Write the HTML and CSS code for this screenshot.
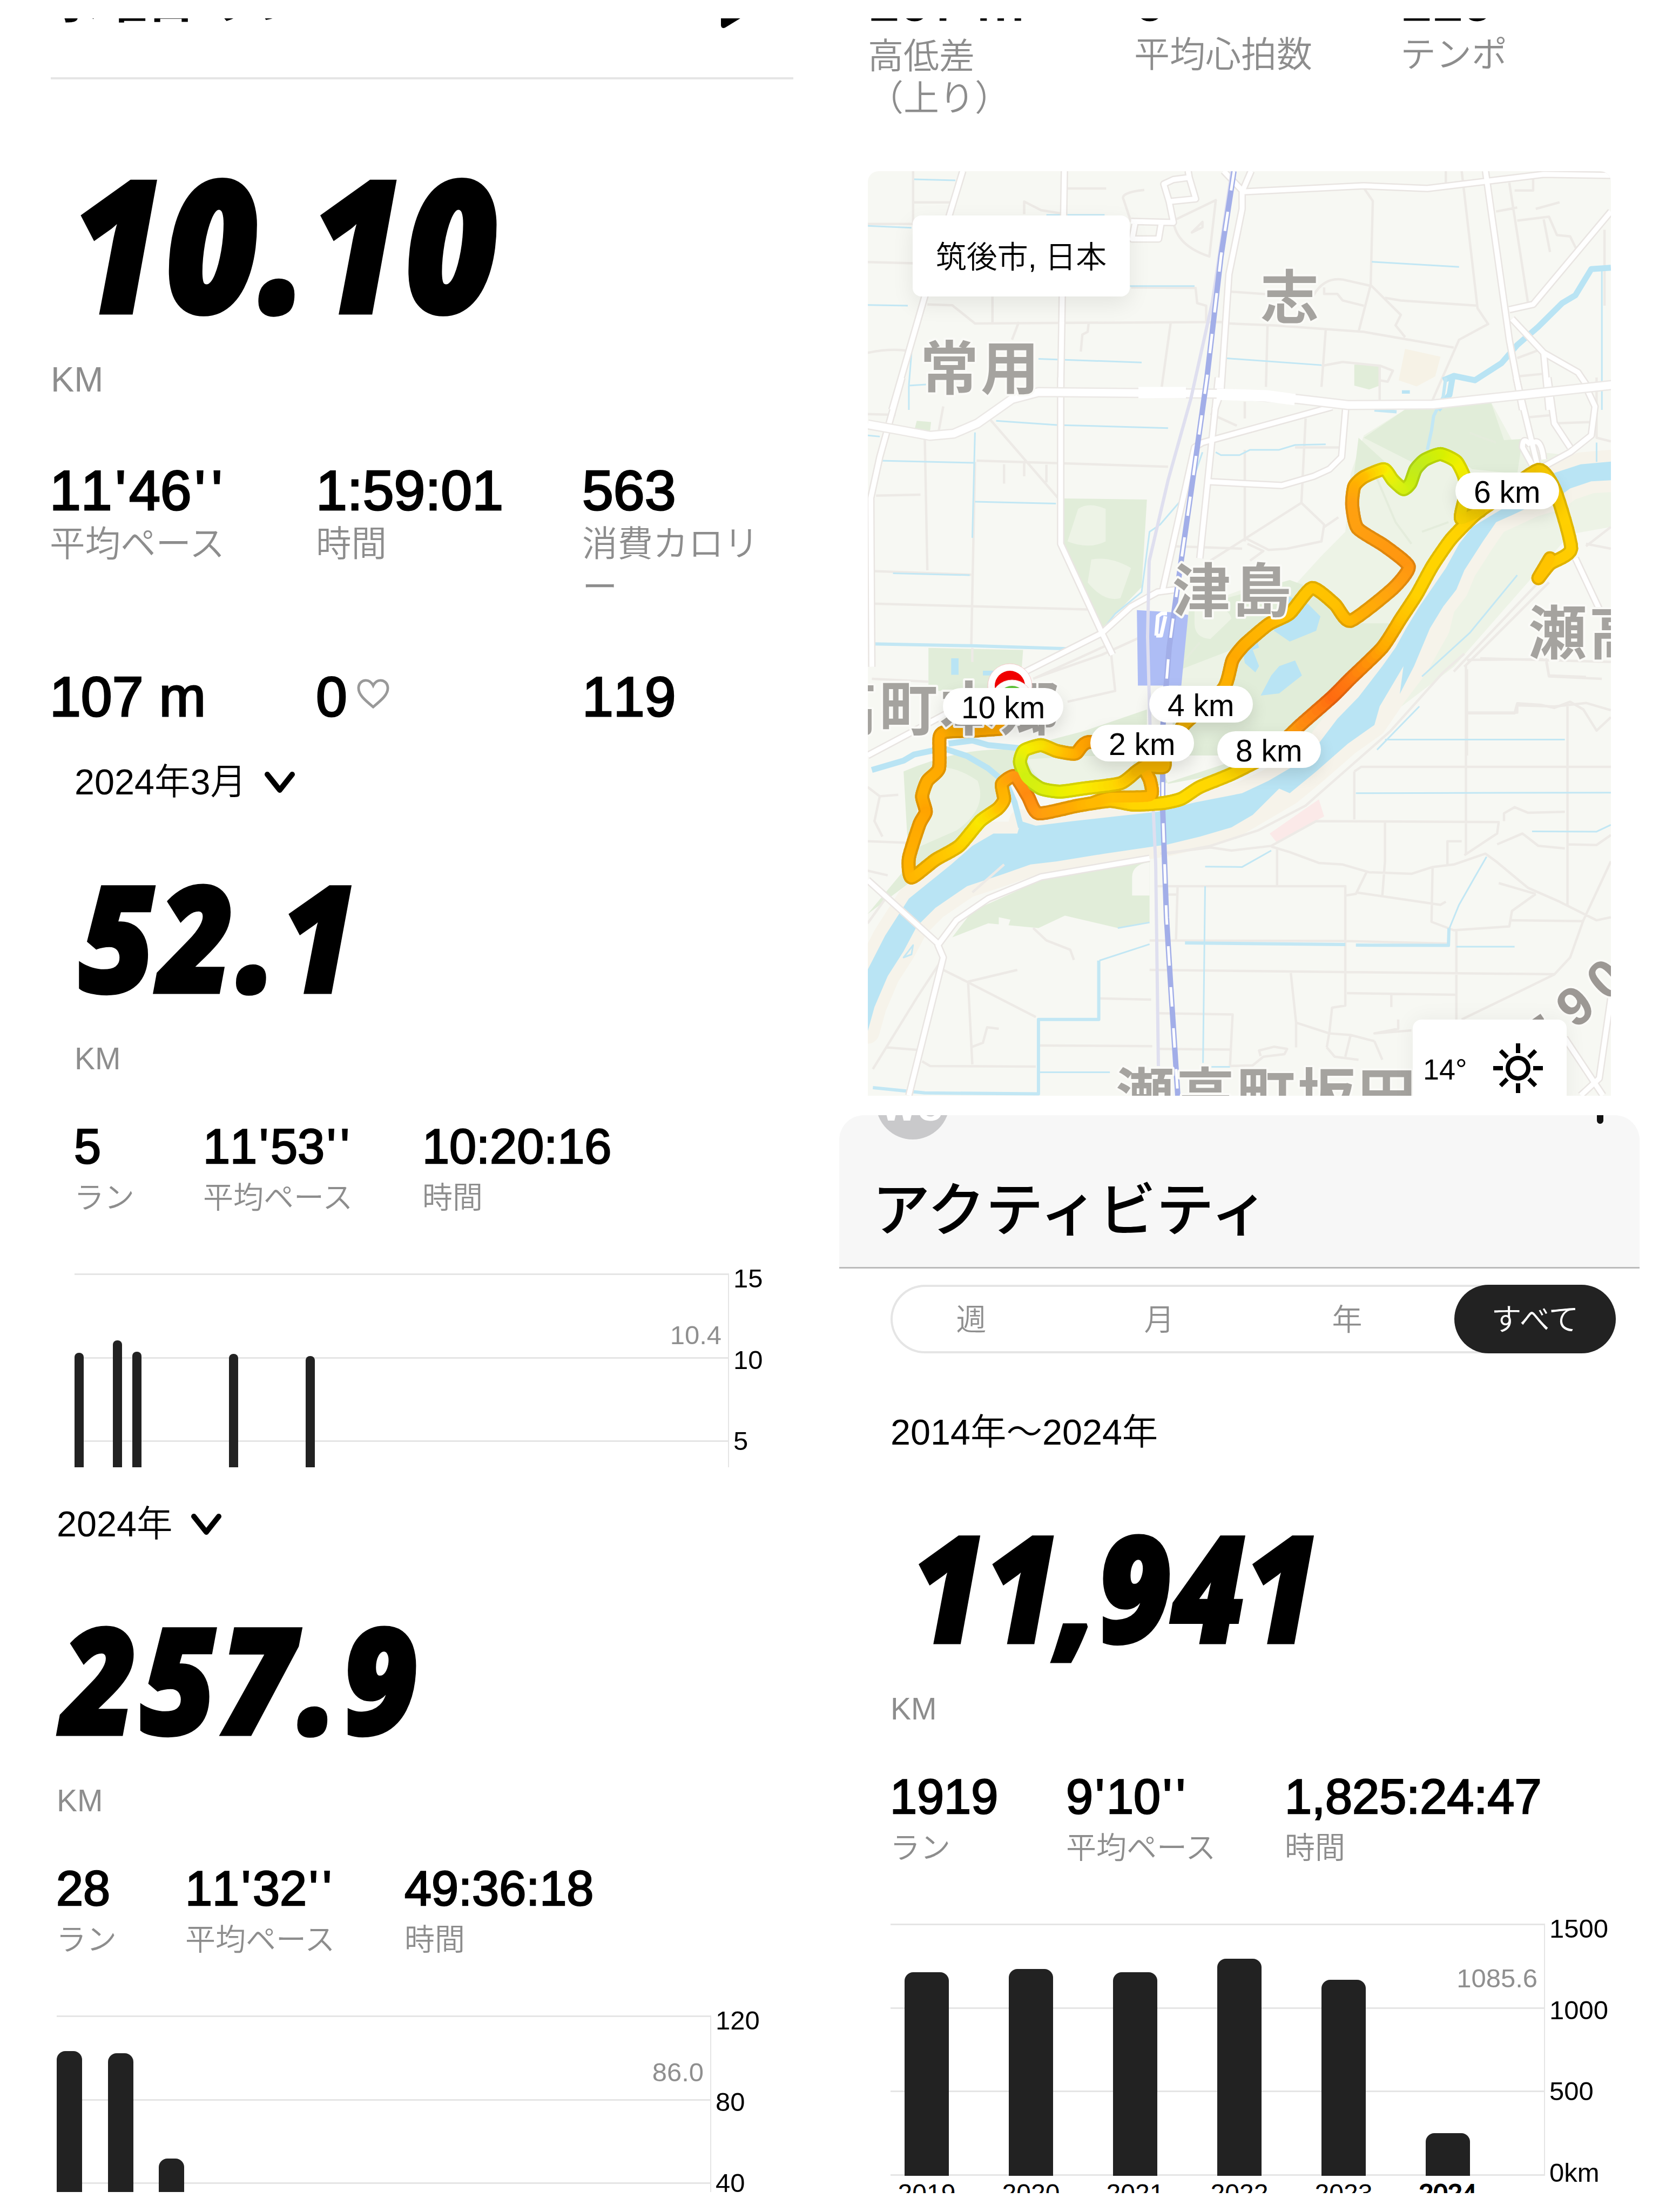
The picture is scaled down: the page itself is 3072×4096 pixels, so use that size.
FILE: index.html
```html
<!DOCTYPE html>
<html lang="ja">
<head>
    <meta charset="UTF-8">
    <meta name="viewport" content="width=device-width, initial-scale=1.0">
    <title>アクティビティ</title>
    <link rel="stylesheet" href="styles.css">
</head>
<body>
<div class="page">

    <div class="column">
        <!-- Run detail -->
        <section class="run">
            <header class="run-header">
                <h1>水曜日 ラン</h1>
                <svg class="bubble" width="50" height="90" viewBox="0 0 50 90"><path d="M4 60 L48 60 L48 66 L12 88 Q5 91 4 84 Z"/></svg>
            </header>
            <div class="distance distance-lg"><span>10.10</span></div>
            <p class="unit unit-lg">KM</p>
            <div class="metrics">
                <div><b>11<i>'</i>46<i>'</i><i>'</i></b><span>平均ペース</span></div>
                <div><b>1:59:01</b><span>時間</span></div>
                <div><b>563</b><span>消費カロリー</span></div>
            </div>
            <div class="metrics metrics-second">
                <div><b>107 m</b></div>
                <div><b>0</b><svg class="heart" width="62" height="58" viewBox="0 0 64 60"><path d="M32 55 C14 40 4 31 4 19 C4 9 11 4 18 4 C25 4 29 8 32 14 C35 8 39 4 46 4 C53 4 60 9 60 19 C60 31 50 40 32 55 Z"/></svg></div>
                <div><b>119</b></div>
            </div>
        </section>

        <!-- Month -->
        <section class="summary month">
            <p class="period">2024年3月 <svg class="chevron" width="56" height="42" viewBox="0 0 56 42"><path d="M5 5 L28 34 L51 5"/></svg></p>
            <div class="distance"><span>52.1</span></div>
            <p class="unit">KM</p>
            <div class="totals">
                <div><b>5</b><span>ラン</span></div>
                <div><b>11<i>'</i>53<i>'</i><i>'</i></b><span>平均ペース</span></div>
                <div><b>10:20:16</b><span>時間</span></div>
            </div>
            <div class="chart">
                <div class="plot">
                    <div class="lines"><i></i><i></i><i></i></div>
                    <em class="average" style="top: 89px">10.4</em>
                    <div class="bars days">
                        <i style="grid-column: 1; height: 320px"></i>
                        <i style="grid-column: 3; height: 343px"></i>
                        <i style="grid-column: 4; height: 322px"></i>
                        <i style="grid-column: 9; height: 318px"></i>
                        <i style="grid-column: 13; height: 314px"></i>
                    </div>
                </div>
                <div class="axis"><span>15</span><span>10</span><span>5</span></div>
            </div>
        </section>

        <!-- Year -->
        <section class="summary year">
            <p class="period">2024年 <svg class="chevron" width="56" height="42" viewBox="0 0 56 42"><path d="M5 5 L28 34 L51 5"/></svg></p>
            <div class="distance"><span>257.9</span></div>
            <p class="unit">KM</p>
            <div class="totals">
                <div><b>28</b><span>ラン</span></div>
                <div><b>11<i>'</i>32<i>'</i><i>'</i></b><span>平均ペース</span></div>
                <div><b>49:36:18</b><span>時間</span></div>
            </div>
            <div class="chart">
                <div class="plot">
                    <div class="lines"><i></i><i></i><i></i></div>
                    <em class="average" style="top: 80px">86.0</em>
                    <div class="bars months">
                        <i style="height: 401px"></i>
                        <i style="height: 397px"></i>
                        <i style="height: 202px"></i>
                    </div>
                </div>
                <div class="axis"><span>120</span><span>80</span><span>40</span></div>
            </div>
        </section>
    </div>

    <div class="column">
        <!-- Route -->
        <section class="route">
            <div class="metrics">
                <div><b>107 m</b><span>高低差<br>（上り）</span></div>
                <div class="raised"><b>0</b><span>平均心拍数</span></div>
                <div class="raised"><b>119</b><span>テンポ</span></div>
            </div>
            <div class="map">
                <svg class="map-art" width="1376" height="1712" viewBox="1607 318 1376 1712">
                    <!-- parks, sand and water -->
                    <g transform="matrix(.9796 0 0 .4847 1536 0)">
                        <path class="park" d="M992 1395 L1042 1395 L1040 1475 L1020 1490 L992 1475Z"/>
                        <path class="sand" d="M1088 1335 L1155 1365 L1145 1440 L1110 1478 L1076 1455Z"/>
                    </g>
                    <g transform="matrix(.9796 0 0 .4464 1536 700)">
                        <path class="park" d="M440 502 L600 506 L590 870 L515 1040 L440 690Z"/>
                        <path class="meadow" d="M470 545 Q490 515 522 545 L522 680 Q490 715 450 680Z M495 755 Q530 740 570 790 L550 915 Q520 935 488 850Z"/>
                        <path class="park" d="M187 1122 L366 1130 L360 1300 L187 1300Z M165 180 L192 185 L190 222 L160 222Z"/>
                        <path class="meadow" d="M1090 130 L1250 100 L1300 300 L1477 340 L1477 620 L1400 650 L1300 900 L1180 1200 L1060 1400 L900 1568 L640 1568 L680 960 L780 880 L880 860 L930 740 L975 640 L985 400 L1010 240Z"/>
                        <path class="park" d="M1090 130 L1250 100 L1275 260 L1310 255 L1300 400 L1215 380 L1160 300 L1100 350 L1010 250Z M1000 250 L1050 350 L990 430Z M680 960 L870 840 L920 880 L990 1020 L1080 1020 L980 1260 L860 1480 L740 1568 L640 1568Z"/>
                        <path class="meadow" d="M690 960 Q750 930 760 1000 L720 1085 Q690 1080 690 1020Z M760 1130 L745 1280 L660 1350 L665 1210Z"/>
                    </g>
                    <g transform="matrix(.9796 0 0 .574 1536 1200)">
                        <path class="park" d="M140 400 Q250 320 345 330 L480 270 L600 200 L600 260 L640 440 L800 390 L900 290 L560 480 L340 430 L260 620 L72 860 L150 700Z"/>
                        <path class="meadow" d="M375 360 L480 350 L580 350 L560 430 L420 455 Q380 410 375 360Z M170 420 Q210 350 280 430 Q300 520 240 590 L160 650Z"/>
                        <path class="park" d="M232 935 L270 850 L400 750 L605 690 L605 885 L545 905 L445 865 L395 905 L300 890Z"/>
                        <path class="block" d="M605 692 Q572 700 572 740 V800 H605Z M320 870 L342 878 L338 898 L320 895Z"/>
                        <path class="shop" d="M832 600 L925 490 L935 545 L845 628Z"/>
                        <path class="bank" d="M72 1240 L72 1040 L105 930 L150 810 L230 700 L270 640 L310 600 L355 600 L362 560 L390 575 L460 560 L540 545 L620 530 L690 500 L780 470 L830 430 L870 390 L920 320 L960 230 L1000 160 L1045 60 L1070 0 L1090 -62 L1115 -132 L1165 -256 L1190 -334 L1215 -389 L1290 -466 L1340 -521 L1370 -563 L1420 -591 L1480 -600 L1480 -540 L1440 -536 L1400 -513 L1375 -482 L1330 -459 L1290 -427 L1260 -404 L1235 -342 L1200 -249 L1185 -187 L1160 -132 L1150 -62 L1110 60 L1070 150 L1030 250 L980 310 L920 400 L870 470 L800 540 L760 580 L700 610 L640 635 L600 645 L520 665 L430 690 L380 700 L330 730 L260 770 L200 840 L165 900 L140 980 L110 1060 L85 1160Z"/>
                        <path class="river" d="M72 1240 L72 1040 L105 930 L150 810 L230 700 L270 640 L310 600 L355 600 L362 560 L390 575 L460 560 L540 545 L620 530 L690 500 L780 470 L830 430 L870 390 L920 320 L960 230 L1000 160 L1045 60 L1070 0 L1090 -62 L1115 -132 L1165 -256 L1190 -334 L1215 -389 L1290 -466 L1340 -521 L1370 -563 L1420 -591 L1480 -600 L1480 -540 L1440 -536 L1400 -513 L1375 -482 L1330 -459 L1290 -427 L1260 -404 L1235 -342 L1200 -249 L1185 -187 L1160 -132 L1135 -62 L1105 60 L1078 150 L1085 60 L1040 190 L1030 250 L980 310 L920 400 L870 470 L850 455 L800 540 L760 580 L700 610 L640 635 L600 645 L520 665 L430 690 L380 700 L330 730 L260 770 L200 840 L165 900 L140 980 L110 1060 L85 1160Z"/>
                        <path class="river" d="M860 -170 L905 -140 L928 -100 L920 -54 L870 -19 L840 -54Z M850 60 L880 42 L893 90 L850 148 L815 155 L835 90Z M780 -5 L805 -40 L812 0 L800 8 L812 60 L805 80 L785 50Z M230 35 L244 35 L244 88 L230 88Z M290 75 L320 75 L320 90 L290 90Z"/>
                        <path class="stream stream-wide" d="M80 395 L140 365 L160 345 L215 325 L260 350 L300 390 L335 440 L350 500 L362 580"/>
                        <path class="stream stream-wide" d="M225 310 L270 300 L300 315 L360 325"/>
                    </g>

                    <!-- streets -->
                    <g transform="matrix(.9796 0 0 .4847 1536 0)">
                        <path class="lane" d="M158 655 V860 M158 775 H228 M72 858 H158 M72 1003 L158 1008 M368 820 V772 L400 805 L440 818 M448 722 H523 M595 728 Q548 738 556 765 L570 850 M650 845 L732 765 M650 845 Q655 940 718 982 L730 770 M685 890 L705 850 L705 870Z M570 1100 L692 1102 L695 1160 L712 1170 V1235 M185 1165 L232 1168 L275 1238 L745 1232 M308 1135 V1235 M358 1232 L345 1300 M490 1235 L488 1270 L478 1280 L475 1345 M645 1235 L628 1480 M750 1115 L840 1128 M745 1237 L840 1245 L1010 1270 L1180 1330 M828 1245 L825 1480 M938 1262 L930 1480 M1010 720 L1027 770 L1023 1090 L1000 1270 M915 1130 Q935 1060 970 1070 L1025 1095 L1080 1205 L1070 1245 L1088 1290 M1050 1140 L1080 1150 L1225 1170 M935 1100 V1125 H960 L970 1150 L1010 1170 M1195 655 L1225 1180 L1245 1240 L1190 1300 L1140 1530 M1165 655 V700 M1285 700 L1320 1155 M1330 680 V730 H1295 M1335 800 L1380 775 M1260 810 L1300 795 M1300 845 L1360 830 L1375 900 L1400 905 L1412 955 M1350 840 L1362 965 M930 1400 L970 1385 L1042 1400 L1065 1418 L1055 1460 L1040 1455 M1040 1400 V1530 M1465 880 V1170 M1300 1370 L1340 1340 M1300 1440 L1350 1430 M72 1350 Q120 1330 155 1345"/>
                        <path class="stream" d="M72 865 L155 872 M160 687 L238 691 M410 823 H520 M568 1095 H690 M72 1167 L148 1170 M395 1373 L590 1387 M745 1370 L930 1397 M1025 1002 L1190 1022 M150 1568 V1475 L190 1470 M155 1350 L150 1475 M1460 1025 V1568"/>
                        <path class="stream stream-wide" d="M1477 1025 L1440 1030 L1425 1080 L1410 1130 L1385 1160 L1340 1250 L1300 1320 L1270 1390 L1220 1455 L1180 1438 L1160 1455 M1178 1440 L1172 1510 L1150 1568"/>
                        <path class="river" d="M1082 1493 H1097 V1506 H1082Z"/>
                    </g>
                    <g transform="matrix(.9796 0 0 .4464 1536 700)">
                        <path class="lane" d="M72 152 L125 155 M180 240 L185 800 M215 120 L205 240 M300 165 L432 500 M278 345 L640 370 M330 360 V440 M368 355 V410 M410 362 V435 M88 490 L172 486 M82 803 L268 818 M82 938 L487 962 M275 350 L268 1110 M785 300 V680 M900 170 L892 520 L935 610 L930 680 L865 710 L830 715 L785 665 M892 520 L720 760 M790 690 L820 720 L795 760 M935 620 L962 580 M650 700 L780 710 M720 150 L770 200 M785 100 V170 M880 290 H975 M1320 165 L1370 155 M1375 190 L1440 185 M1450 0 V250 L1477 265 M1430 690 L1477 710 M1430 700 L1477 620 M1340 850 L1180 1220 M1360 850 L1200 1200 M1205 1210 L1205 1568 M1230 1165 L1477 1180 M1205 1390 L1300 1390 V1360 L1370 1365 L1430 1350 L1477 1380 M1355 1180 L1360 1240 L1460 1250 M385 1250 L525 1110 M585 1080 L515 1150 L390 1245 M530 1100 L540 1300 L450 1345 M80 1250 L187 1262 M270 1122 V1180"/>
                        <path class="track" d="M1035 420 L1070 600 L1100 690 M1120 640 L1170 600 M1210 230 L1260 270 M990 640 L1050 700 M700 1100 L660 1200"/>
                        <path class="stream" d="M315 180 L430 197 L640 210 M95 345 L272 354 M275 228 L270 665 M275 515 L428 523 M120 812 L265 820 M730 310 L740 322 L775 322 L795 300 L850 300 L880 280 L938 277 M705 310 L680 470 L625 610 L605 640 L590 890 L540 980 L515 1050 M72 240 L95 245 M1450 270 V350 M1300 820 L1240 980 L1210 1060 L1120 1240"/>
                        <path class="stream stream-mid" d="M80 1105 L270 1113 L450 1125 M1165 0 L1160 80 L1142 160 L1138 220 L1130 300 M1030 135 L1072 142"/>
                        <path class="station" d="M581 965 L655 975 L678 985 L665 1278 L583 1278Z"/>
                    </g>
                    <g transform="matrix(.9796 0 0 .574 1536 1200)">
                        <path class="lane" d="M72 450 L95 480 L130 475 M95 480 L85 560 L100 610 M72 625 L145 630 M72 720 L110 735 M72 890 L110 800 M82 1360 L165 1130 L215 1000 M215 1040 L262 1080 L390 1192 M262 1078 L355 1040 M262 1080 L270 1345 M270 1288 L290 1275 L298 1225 L320 1230 M108 1290 L165 1298 M175 1335 L190 1350 L390 1352 M385 905 L410 945 L455 975 L462 1008 M510 1132 L608 1136 M398 1284 L610 1286 M620 770 H975 V1155 L950 1162 L945 1240 L940 1290 M658 770 L655 945 M605 945 L975 947 L1170 955 M605 1040 L975 1047 L1372 1054 M622 1180 L762 1184 L757 1350 M622 1295 L757 1297 M640 797 H658 M846 645 V770 M625 665 L720 645 L760 655 L835 640 L920 560 L1265 563 L1262 600 L1200 670 M992 400 V555 M992 400 L1005 385 L1477 385 M1203 60 V670 M1203 212 L1295 212 L1300 180 L1345 185 L1370 195 L1400 175 L1425 200 L1450 268 L1477 225 M1205 40 L1355 38 L1360 90 L1430 95 M1395 190 V835 M1275 560 L1275 535 L1295 515 L1320 533 L1390 530 M835 642 L870 660 L925 695 L970 700 L1020 725 L1100 730 L1140 708 L1180 700 L1240 665 L1260 690 L1320 775 L1380 820 L1450 880 L1477 870 M1050 565 V690 L1045 800 M1015 725 L995 795 L975 800 M995 790 L1155 830 L1165 820 M1140 710 L1138 885 L1180 912 L1285 900 L1290 850 L1335 795 M1335 795 L1265 760 M1285 880 L1425 883 M1477 690 L1425 880 L1400 1000 L1370 1055 L1195 1200 M1395 635 L1450 637 L1477 605 M1195 625 H1168 V700 M1262 635 L1310 600 L1340 640 L1390 648 M1185 910 V1200 M872 1050 L882 1210 L945 1245 L985 1250 L1030 1270 M882 1210 V1290 M978 1115 L1185 1120 M1062 1118 V1160 M757 1350 L800 1348 L820 1320 L860 1312 L865 1295 L840 1288 L812 1300 L815 1318 M940 1290 L955 1320 L1000 1330 M985 1250 L975 1320 M1075 1200 V1230 L1030 1245 L1100 1235 M1030 1270 L1045 1330 M270 790 L330 700"/>
                        <path class="lane" d="M640 665 L720 640 L810 590 L900 510 L980 390 L1060 270 L1160 80 L1200 20"/>
                        <path class="stream" d="M1050 297 H1390 M1035 330 L1115 190 M995 470 L1477 468 M1328 593 L1450 594 L1477 572 M710 707 L780 708 L835 655 M710 770 L706 1340 M1242 675 L1220 740 L1190 830 L1172 905 M605 957 L510 1010 M398 1370 H530 M722 1353 H757 M1185 965 H1295 M158 960 L140 1000 L155 990Z M545 905 L605 887"/>
                        <path class="stream stream-mid" d="M672 953 L975 958 M995 960 L1170 961 L1171 905 M509 1010 V1200 H395 V1440 L180 1437 L82 1420"/>
                    </g>

                    <g class="casing">
                        <use href="#roads"/>
                    </g>
                    <g class="surface">
                        <g id="roads">
                            <path transform="matrix(.9796 0 0 .4847 1536 0)" d="M252 655 L180 1135 L118 1568 M444 655 L437 1490 M745 655 L780 730 L780 800 L755 1050 L740 1500 L728 1568 M797 655 L780 735 L1010 712 L1130 722 L1350 668 L1477 672 M1240 655 L1285 1300 L1310 1568 M1477 810 L1330 1165 L1285 1185 M1290 1220 L1350 1350 L1415 1425 L1440 1500 M1350 1350 L1360 1568 M678 655 L680 680 L692 762 L642 772 L632 705 L650 688 L680 680 M642 772 L650 852 L570 848 M578 850 L572 915 L622 915 L627 855"/>
                            <path transform="matrix(.9796 0 0 .4464 1536 700)" d="M137 0 L95 330 L78 500 L80 1200 M437 0 V690 L515 1060 L535 1150 M735 0 L715 430 L700 750 M1298 0 L1340 380 M950 122 L705 270 L690 290 L630 880 M976 120 L968 330 L945 380 L915 410 L855 448 L715 432 M72 1568 L375 1215 L515 1060 L570 950 L620 890 L655 880 M1430 40 L1447 120 L1440 240 L1400 310 L1350 370 M1358 0 L1370 190 L1400 290 M1410 750 L1455 960 M1325 280 Q1310 240 1310 290 L1330 370 M1330 270 Q1345 250 1350 340"/>
                            <path transform="matrix(.9796 0 0 .574 1536 1200)" d="M605 680 L400 740 L300 810 L240 880 L205 960 L215 1000 L150 1445 M72 750 L205 955 M1477 1130 L1455 1390 L1420 1445 M1390 1260 L1462 1445"/>
                        </g>
                    </g>
                    <path class="platform" d="M2141 1178 L2144 1142 L2151 1137 H2161 M2141 1178 H2150 L2158 1142"/>
                    <path class="avenue-casing" d="M1607 787 L1663 797 L1722 808 L1766 804 L1810 785 L1874 740 L1923 727 L2261 730 L2403 740 L2496 751 L2653 750 L2829 731 L2984 714"/>
                    <path class="avenue" d="M1607 787 L1663 797 L1722 808 L1766 804 L1810 785 L1874 740 L1923 727 L2261 730 L2403 740 L2496 751 L2653 750 L2829 731 L2984 714"/>
                    <path class="avenue avenue-wide" d="M2108 728 H2196 M2253 731 L2345 734 L2398 741"/>

                    <!-- railway -->
                    <path class="rail-side" d="M2281 318 L2245 560 L2205 740 L2163 890 L2128 1040 L2125 1180 L2131 1400 L2140 1600 L2145 1975"/>
                    <path class="rail" d="M2285 318 L2261 475 L2235 700 L2207 901 L2190 1020 L2178 1105 L2165 1200 L2153 1350 L2153 1500 L2160 1700 L2168 1830 L2181 2030"/>
                    <path class="rail-dash" d="M2285 318 L2261 475 L2235 700 L2207 901 L2190 1020 L2178 1105 L2165 1200 L2153 1350 L2153 1500 L2160 1700 L2168 1830 L2181 2030"/>

                    <g id="track-line" transform="matrix(.9796 0 0 .574 1536 1200)"></g>

                    <g class="places">
                        <text x="2334" y="591">志</text>
                        <text x="1704" y="722">常用</text>
                        <text x="2171" y="1134">津島</text>
                        <text x="2830" y="1212">瀬高</text>
                        <text x="1516" y="1353">高町本郷</text>
                        <text x="2066" y="2068">瀬高町坂田</text>
                        <text class="road-no" transform="translate(2916 1908) rotate(-38)">9</text>
                        <text class="road-no" transform="translate(2976 1858) rotate(-42)">0</text>
                        <text class="road-no" transform="translate(2850 1964) rotate(-35)">7</text>
                    </g>
                    <circle class="ring" cx="1870" cy="1271" r="41"/>
                    <circle class="finish" cx="1870" cy="1271" r="28"/>
                    <circle class="ring" cx="1874" cy="1299" r="39"/>
                    <circle class="start" cx="1874" cy="1299" r="28"/>
                </svg>

                <div class="place-card">筑後市, 日本</div>
                <span class="km" style="left: 139px; top: 957px">10 km</span>
                <span class="km" style="left: 521px; top: 953px">4 km</span>
                <span class="km" style="left: 412px; top: 1025px">2 km</span>
                <span class="km" style="left: 647px; top: 1037px">8 km</span>
                <span class="km" style="left: 1088px; top: 558px">6 km</span>
                <div class="weather">
                    <span>14°</span>
                    <svg width="96" height="96" viewBox="0 0 96 96">
                        <circle cx="48" cy="48" r="19"/>
                        <path d="M48 2V20M48 76V94M2 48H20M76 48H94M15.500 15.500L28 28M68 68L80.500 80.500M15.500 80.500L28 68M68 28L80.500 15.500"/>
                    </svg>
                </div>
            </div>
        </section>

        <!-- All time -->
        <section class="all-time">
            <header class="app-header">
                <div class="app-bar">
                    <span class="avatar">WU</span>
                    <svg class="plus" width="80" height="80" viewBox="0 0 80 80"><path d="M40 6V74M6 40H74"/></svg>
                </div>
                <h2>アクティビティ</h2>
            </header>
            <nav class="tabs">
                <span>週</span><span>月</span><span>年</span><span class="active">すべて</span>
            </nav>
            <div class="summary total">
                <p class="period">2014年〜2024年</p>
                <div class="distance"><span>11,941</span></div>
                <p class="unit">KM</p>
                <div class="totals">
                    <div><b>1919</b><span>ラン</span></div>
                    <div><b>9<i>'</i>10<i>'</i><i>'</i></b><span>平均ペース</span></div>
                    <div><b>1,825:24:47</b><span>時間</span></div>
                </div>
                <div class="chart">
                    <div class="plot">
                        <div class="lines"><i></i><i></i><i></i></div>
                        <em class="average" style="top: 76px">1085.6</em>
                        <div class="bars years">
                            <i style="height: 377px"></i>
                            <i style="height: 383px"></i>
                            <i style="height: 377px"></i>
                            <i style="height: 402px"></i>
                            <i style="height: 363px"></i>
                            <i style="height: 79px"></i>
                        </div>
                        <div class="years year-labels">
                            <span>2019</span><span>2020</span><span>2021</span><span>2022</span><span>2023</span><span class="current">2024</span>
                        </div>
                    </div>
                    <div class="axis"><span>1500</span><span>1000</span><span>500</span><span>0km</span></div>
                </div>
            </div>
        </section>
    </div>

</div>
<script src="script.js"></script>
</body>
</html>
```
FILE: styles.css
```css
* { box-sizing: border-box; margin: 0; padding: 0; }
body { background-color: #fff; color: #000; font-family: "Liberation Sans", "Noto Sans CJK JP", sans-serif; }
b, i, em, h1, h2 { font-style: normal; font-weight: normal; }

.page { display: grid; grid-template-columns: 1536px 1536px; width: 3072px; height: 4096px; padding-top: 34px; overflow: hidden; }
section { overflow: hidden; }

/* Run detail */
.run { height: 1346px; padding-left: 94px; }
.run-header { display: flex; justify-content: space-between; width: 1375px; height: 189px; margin-top: -76px; padding-right: 88px; border-bottom: 4px solid #e5e5e5; }
.run-header h1 { font-size: 89px; font-weight: bold; line-height: 88px; font-kerning: none; }
.bubble { display: block; margin-top: 5px; }
.distance { height: 275px; margin-top: 106px; font-family: "Open Sans", sans-serif; font-size: 272px; font-weight: 800; font-style: italic; line-height: 275px; white-space: nowrap; -webkit-text-stroke: 7px #000; }
.distance span { display: inline-block; margin-left: 9px; letter-spacing: .032em; transform: scaleX(.88); transform-origin: 0 50%; }
.distance-lg { height: 344px; margin-top: 129px; font-size: 340px; line-height: 344px; }
.distance-lg span { margin-left: 38px; letter-spacing: .014em; transform: scaleX(.865); }
.total .distance span { margin-left: 39px; letter-spacing: .003em; transform: scaleX(.86); }
.unit { height: 70px; margin-top: 56px; color: #8d8d8d; font-size: 57px; line-height: 70px; }
.unit-lg { height: 80px; margin-top: 43px; margin-bottom: 1px; font-size: 65px; line-height: 80px; }

.metrics { display: grid; grid-template-columns: 493px 493px 350px; margin: 114px 0 0 -2px; }
.metrics b { display: inline-block; height: 104px; font-size: 104px; line-height: 102px; vertical-align: top; font-kerning: none; -webkit-text-stroke: 3px #000; }
.metrics b i { margin: 0 .055em; }
.metrics span { display: block; margin-top: 7px; color: #8d8d8d; font-size: 65.500px; font-weight: 350; line-height: 80px; }
.metrics > div { line-height: 104px; }
.metrics-second { margin-top: 111px; }
.heart { margin: 17px 0 0 17px; vertical-align: top; fill: none; stroke: #999; stroke-width: 5; }

/* Month, year and all time totals */
.summary { padding-left: 138px; }
.month { height: 1337px; padding-top: 28px; }
.year { height: 1305px; margin-top: 37px; padding: 28px 0 0 105px; }
.total { padding: 106px 0 0 113px; }
.period { height: 80px; font-size: 66.500px; font-weight: 350; line-height: 80px; }
.chevron { margin-left: 16px; fill: none; stroke: #000; stroke-width: 10; stroke-linecap: round; stroke-linejoin: round; }
.totals { display: grid; grid-template-columns: 239px 406px auto; height: 176px; margin: 84px 0 0 -1px; }
.total .totals { grid-template-columns: 326px 405px auto; }
.totals b { display: block; height: 90px; font-size: 90px; line-height: 88px; white-space: nowrap; font-kerning: none; -webkit-text-stroke: 2.5px #000; }
.totals b i { margin: 0 .043em; }
.totals span { display: block; margin-top: 14px; color: #8d8d8d; font-size: 56px; font-weight: 350; line-height: 70px; }

.chart { display: grid; grid-template-columns: 1212px auto; margin-top: 103px; font-size: 49px; }
.plot { position: relative; height: 467px; border-right: 2px solid #e5e5e5; }
.lines { position: absolute; inset: 0; display: grid; grid-template-rows: repeat(3, 1fr); border-bottom: 3px solid #e5e5e5; }
.lines i { border-top: 3px solid #e5e5e5; }
.average { position: absolute; right: 12px; color: #8f8f8f; line-height: 50px; }
.bars { position: relative; display: grid; align-items: end; height: 467px; }
.bars i { background-color: #222; border-radius: 16px 16px 0 0; }
.days { grid-template-columns: repeat(31, 17px); column-gap: 18.700px; }
.days i { grid-row: 1; border-radius: 8px 8px 0 0; }
.months { grid-template-columns: repeat(12, 47px); column-gap: 47.500px; }
.years { grid-template-columns: repeat(6, 82px); column-gap: 111px; padding-left: 26px; }
.axis { display: flex; flex-direction: column; margin-top: -16px; padding-left: 8px; }
.axis span { height: 150.500px; line-height: 50px; }
.year-labels { display: grid; margin-top: 8px; font-size: 48px; line-height: 50px; }
.year-labels span { display: flex; justify-content: center; }
.year-labels .current { -webkit-text-stroke: 2px #000; }

/* Route */
.route { height: 1996px; padding-left: 71px; }
.route .metrics { height: 274px; margin: -84px 0 0; }
.route .metrics span { margin-top: 11px; font-size: 66px; line-height: 78px; }
.route .metrics .raised span { margin-top: 8px; }
.map { position: relative; width: 1376px; height: 1712px; margin-top: 93px; background-color: #f7f8f3; border-radius: 20px 20px 0 0; overflow: hidden; }
.map-art { display: block; }
.map path { vector-effect: non-scaling-stroke; stroke-linejoin: round; }
.park { fill: #e1edd9; }
.meadow { fill: #edf3e6; }
.block { fill: #f7f8f3; }
.sand { fill: #f6f2e6; }
.shop { fill: #fbe9e8; }
.bank { fill: #f6f3ea; stroke: #f6f3ea; stroke-width: 44; }
.river { fill: #b9e4f4; }
.station { fill: #aebdf5; }
.lane { fill: none; stroke: #edeae6; stroke-width: 4.500; }
.track { fill: none; stroke: #e4ecdc; stroke-width: 4; }
.stream { fill: none; stroke: #c2e7f4; stroke-width: 3; }
.stream-mid { stroke-width: 6; }
.stream-wide { stroke: #b9e4f4; stroke-width: 11; }
.casing { fill: none; stroke: #e9e5e2; stroke-width: 14; }
.surface { fill: none; stroke: #fff; stroke-width: 9; }
.casing path, .surface path { stroke: inherit; }
.platform { fill: none; stroke: #fff; stroke-width: 7; }
.avenue-casing { fill: none; stroke: #ebe8e5; stroke-width: 19; }
.avenue { fill: none; stroke: #fff; stroke-width: 14; }
.avenue-wide { stroke-width: 21; }
.rail-side { fill: none; stroke: #dfdfef; stroke-width: 6; }
.rail { fill: none; stroke: #a2aee8; stroke-width: 10; }
.rail-dash { fill: none; stroke: #fff; stroke-width: 5; stroke-dasharray: 36 40; }
#track-line path { fill: none; stroke-linecap: round; }
.places { fill: #a5a39f; stroke: #fafaf7; stroke-width: 8; stroke-linejoin: round; paint-order: stroke; font-family: "Noto Sans CJK JP", sans-serif; font-size: 108px; font-weight: bold; letter-spacing: 4px; }
.places .road-no { fill: #9c9894; font-family: "Liberation Sans", sans-serif; font-size: 100px; }
.ring { fill: #fff; stroke: #f6c9c9; stroke-width: 1; }
.finish { fill: #f00000; }
.start { fill: #5bc236; }

.place-card { position: absolute; left: 83px; top: 82px; width: 402px; height: 150px; background-color: #fff; border-radius: 16px; box-shadow: 0 14px 40px rgba(0,0,0,.08); font-size: 57px; font-weight: 350; line-height: 154px; text-align: center; }
.km { position: absolute; height: 68px; padding: 0 34px; background-color: #fff; border-radius: 34px; box-shadow: 0 12px 30px rgba(0,0,0,.12); font-size: 57px; line-height: 72px; white-space: nowrap; }
.weather { position: absolute; left: 1009px; top: 1571px; display: flex; align-items: center; gap: 46px; width: 285px; height: 180px; padding-left: 19px; background-color: #fff; border-radius: 16px; box-shadow: 0 0 40px rgba(0,0,0,.06); font-size: 54px; }
.weather span { padding-top: 4px; }
.weather svg { fill: none; stroke: #000; stroke-width: 8; }

/* All time */
.all-time { height: 1996px; margin-top: 35px; }
.app-header { width: 1482px; height: 284px; margin-left: 18px; padding-left: 64px; background-color: #f7f7f7; border-bottom: 3px solid #bbb; border-radius: 46px 46px 0 0; overflow: hidden; }
.app-bar { display: flex; justify-content: space-between; margin-top: -91px; padding-right: 33px; }
.avatar { width: 136px; height: 136px; margin-left: 4px; background-color: #c9c9cb; border-radius: 50%; color: #fff; font-size: 70px; font-weight: bold; line-height: 154px; text-align: center; }
.plus { margin-top: 27px; fill: none; stroke: #111; stroke-width: 12; stroke-linecap: round; }
.app-header h2 { margin-top: 71px; margin-left: -3px; font-size: 107.500px; font-weight: 500; line-height: 122px; }
.tabs { display: flex; justify-content: space-between; width: 1343px; height: 127px; margin: 30px 0 0 113px; border-radius: 64px; box-shadow: inset 0 0 0 4px #e5e5e5; color: #8f8f8f; font-size: 56px; font-weight: 350; line-height: 130px; text-align: center; }
.tabs span { width: 299px; border-radius: 64px; }
.tabs .active { background-color: #222; color: #fff; }
```
FILE: script.js
```js
// Run track: x, y, pace colour
const legs = [
    [
        [325, 262, '#ffa800'], [275, 268, '#f5a300'], [220, 272, '#f5a800'], [208, 290, '#ffa800'], [207, 390, '#ffa800'],
        [185, 430, '#ffac00'], [175, 480, '#ffae00'], [182, 530, '#ffa200'], [170, 570, '#ffa800'], [150, 680, '#ffb000'],
        [155, 742, '#ffb400'], [200, 685, '#ffc000'], [245, 640, '#ffd000'], [285, 560, '#f8e800'], [318, 520, '#ffc800'],
        [330, 490, '#ffb800'], [326, 440, '#ffb000'], [350, 415, '#ff9a10'], [375, 480, '#ff8a10'], [395, 535, '#ff9a10'],
        [470, 510, '#ffb000'], [530, 495, '#ffc400'], [575, 507, '#ffd400'], [630, 502, '#ffd800'], [665, 488, '#ffdc00'],
        [700, 450, '#ffd800'], [760, 408, '#ffd800'], [830, 345, '#ffc400'], [890, 250, '#ff9010'], [950, 160, '#ff6a10'],
        [985, 100, '#ff7a10'], [1045, 0, '#ffa800'], [1080, -93, '#ffc000'], [1110, -171, '#ffd000'], [1140, -264, '#ffd400'],
        [1175, -350, '#ffd400'], [1220, -428, '#ffcf00'], [1260, -477, '#f5c800'], [1340, -573, '#f0c400'], [1372, -505, '#ffd000'],
        [1402, -319, '#ffcf00'], [1362, -270, '#ffc800'], [1340, -224, '#ffc400'], [1362, -288, '#ffc400']
    ],
    [
        [1230, -440, '#f0c800'], [1195, -414, '#f5d000'], [1195, -440, '#f5d000'], [1203, -500, '#f0e000'], [1200, -550, '#f4ec00'],
        [1185, -600, '#f0f000'], [1155, -624, '#d8f000'], [1125, -605, '#c8ee10'], [1108, -575, '#c0ea20'], [1098, -530, '#c8ee10'],
        [1085, -511, '#d0f010'], [1065, -540, '#e0f010'], [1048, -575, '#f8ee00'], [1010, -550, '#ffc000'], [992, -520, '#ffb000'],
        [988, -460, '#ffa010'], [998, -385, '#ffa010'], [1050, -327, '#ff9a10'], [1095, -261, '#ff9510'], [1065, -190, '#ffa010'],
        [985, -86, '#ffb400'], [955, -140, '#ffc000'], [912, -192, '#ffc400'], [870, -110, '#ffc400'], [830, -75, '#ffb800'],
        [785, -10, '#ffb000'], [762, 40, '#ffa800'], [745, 132, '#ffb400'], [670, 249, '#f0b000'], [635, 340, '#f0b400'],
        [632, 385, '#f0b400'], [595, 385, '#f0b000'], [606, 430, '#ffb000'], [606, 480, '#ffb800'], [530, 485, '#ffc000'],
        [500, 500, '#ffb800']
    ],
    [
        [600, 320, '#ff9a10'], [490, 305, '#ffa000'], [465, 342, '#ffa800'], [430, 334, '#ffc400'], [400, 315, '#f8dc00'],
        [368, 332, '#f4f000'], [360, 370, '#e0f010'], [372, 420, '#d0f010'], [400, 455, '#d8f010'], [435, 465, '#e8f000'],
        [480, 455, '#f8ee00'], [550, 438, '#ffd000'], [580, 400, '#f0b400'], [600, 380, '#f0b000'], [632, 382, '#f0b000']
    ]
];

const track = document.getElementById('track-line');
const STEPS = 8;

function mix(a, b, t, shade) {
    const part = (hex, i) => parseInt(hex.slice(i, i + 2), 16);
    return 'rgb(' + [1, 3, 5].map(i => Math.round((part(a, i) * (1 - t) + part(b, i) * t) * shade)).join(',') + ')';
}

// rounded curve through the recorded points
function curve(points, i, t, axis) {
    const p1 = points[i][axis], p2 = points[i + 1][axis];
    const p0 = points[Math.max(i - 1, 0)][axis];
    const p3 = points[Math.min(i + 2, points.length - 1)][axis];
    const m1 = (p2 - p0) * 0.3, m2 = (p3 - p1) * 0.3;
    const t2 = t * t, t3 = t2 * t;
    return (2 * t3 - 3 * t2 + 1) * p1 + (t3 - 2 * t2 + t) * m1 + (3 * t2 - 2 * t3) * p2 + (t3 - t2) * m2;
}

function drawLeg(points, width, shade) {
    for (let i = 0; i < points.length - 1; i++) {
        for (let s = 0; s < STEPS; s++) {
            const a = s / STEPS, b = (s + 1) / STEPS;
            const path = document.createElementNS('http://www.w3.org/2000/svg', 'path');
            path.setAttribute('d', `M${curve(points, i, a, 0)} ${curve(points, i, a, 1)}L${curve(points, i, b, 0)} ${curve(points, i, b, 1)}`);
            path.setAttribute('stroke', mix(points[i][2], points[i + 1][2], a, shade));
            path.setAttribute('stroke-width', width);
            track.appendChild(path);
        }
    }
}

// dark edges first so that the legs join cleanly
legs.forEach(leg => drawLeg(leg, 26, 0.88));
legs.forEach(leg => drawLeg(leg, 18, 1));
```
